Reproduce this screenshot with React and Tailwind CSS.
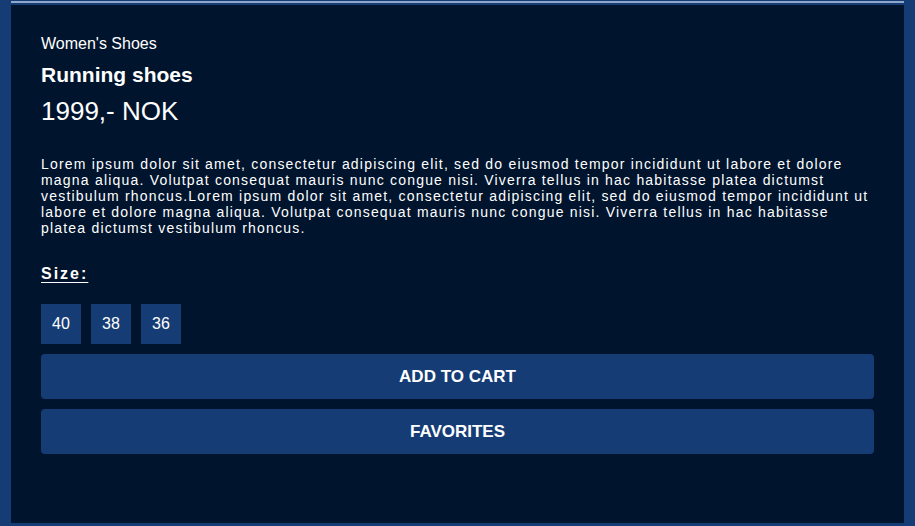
export default function App() {
  const sizes = ["40", "38", "36"];
  return (
    <div className="min-h-screen w-full bg-[#163c75] px-[11px] font-['Liberation_Sans',Arial,sans-serif]">
      <div className="h-[523px] bg-[#00142d] border-t-[5px] border-[#163c75] relative">
        <div className="absolute left-0 right-0 top-[-4px] h-[2px] bg-[#8ea6c8]" />
        <div className="px-[30px] pt-[29px] text-white">
          <p className="text-[16px] leading-[20px]">Women's Shoes</p>
          <h1 className="mt-[9px] text-[21px] leading-[24px] font-bold">Running shoes</h1>
          <p className="mt-[9px] text-[26px] leading-[30px]">1999,- NOK</p>
          <p className="mt-[30px] text-[14px] leading-[16px] font-normal tracking-[1.2px]">
            Lorem ipsum dolor sit amet, consectetur adipiscing elit, sed do eiusmod tempor incididunt ut labore et dolore magna aliqua. Volutpat consequat mauris nunc congue nisi. Viverra tellus in hac habitasse platea dictumst vestibulum rhoncus.Lorem ipsum dolor sit amet, consectetur adipiscing elit, sed do eiusmod tempor incididunt ut labore et dolore magna aliqua. Volutpat consequat mauris nunc congue nisi. Viverra tellus in hac habitasse platea dictumst vestibulum rhoncus.
          </p>
          <p className="mt-[28px] text-[16px] leading-[20px] font-bold tracking-[2px] underline underline-offset-[3px]">Size:</p>
          <div className="mt-[20px] flex gap-[10px]">
            {sizes.map((s) => (
              <div key={s} className="w-[40px] h-[40px] bg-[#163c75] flex items-center justify-center text-[16px]">
                {s}
              </div>
            ))}
          </div>
          <button className="mt-[10px] w-full h-[45px] rounded-[4px] bg-[#163c75] text-[17px] font-bold uppercase">
            Add to cart
          </button>
          <button className="mt-[10px] w-full h-[45px] rounded-[4px] bg-[#163c75] text-[17px] font-bold uppercase">
            Favorites
          </button>
        </div>
      </div>
    </div>
  );
}
